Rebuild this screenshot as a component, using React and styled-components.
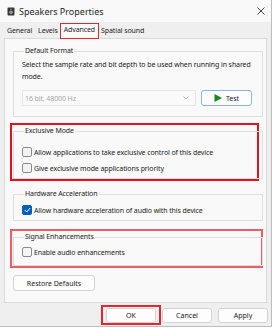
import React from 'react';
import styled, { createGlobalStyle } from 'styled-components';

const Global = createGlobalStyle`
  html, body { margin: 0; padding: 0; background: #ffffff; }
  body { font-family: "Noto Sans", "Open Sans", sans-serif; }
  * { box-sizing: border-box; }
`;

const Window = styled.div`
  width: 272px;
  height: 327px;
  background: #efefef;
  border-right: 1px solid #bdbdbd;
  border-bottom: 1px solid #bdbdbd;
  display: flex;
  flex-direction: column;
  font-size: 7px;
  letter-spacing: -0.1px;
  color: #1b1b1b;
`;

const TitleBar = styled.div`
  height: 22px;
  flex: none;
  background: #f9f9f9;
  display: flex;
  align-items: center;
  padding: 0 6px 0 7px;
  gap: 4px;
`;

const Title = styled.span`
  flex: 1;
  font-size: 9px;
  letter-spacing: 0;
  color: #1f1f1f;
`;

const TabStrip = styled.div`
  height: 16px;
  flex: none;
  display: flex;
  align-items: flex-end;
  padding-left: 4px;
`;

const Tab = styled.div`
  position: relative;
  height: ${p => (p.$active ? '15px' : '14px')};
  line-height: 14px;
  padding: 0 3px;
  background: ${p => (p.$active ? '#fbfbfb' : 'transparent')};
  &::after {
    content: '';
    display: ${p => (p.$mark ? 'block' : 'none')};
    position: absolute;
    inset: 0 -1px -1px -1px;
    border: 1.5px solid #e3262f;
  }
`;

const Panel = styled.div`
  margin: 0 4px;
  height: 265px;
  flex: none;
  background: #f9f9f9;
  border: 1px solid #dadada;
  padding: 7px 5px 0 8px;
  display: flex;
  flex-direction: column;
  align-items: flex-start;
`;

const Highlight = styled.div`
  width: ${p => p.$w}px;
  margin: ${p => p.$mt}px 0 0 -3px;
  padding: 1px 0 0 1px;
  border: 2px solid ${p => (p.$soft ? '#ee5c64' : '#e3121c')};
  display: flex;
`;

const Group = styled.fieldset`
  margin: ${p => p.$mt || 0}px 0 0 0;
  padding: ${p => p.$pad};
  width: 250px;
  flex: none;
  border: 1px solid #dedede;
  min-width: 0;
  display: flex;
  flex-direction: column;
  align-items: flex-start;
  gap: ${p => p.$gap || 0}px;
`;

const Legend = styled.legend`
  padding: 0 1px;
  margin-left: 2px;
  line-height: 10px;
  color: #1b1b1b;
`;

const Desc = styled.p`
  margin: 3px 0 0 0;
  line-height: 12px;
  color: #1b1b1b;
`;

const FormatRow = styled.div`
  display: flex;
  align-items: center;
  gap: 5px;
  margin-top: 7px;
`;

const Select = styled.div`
  width: 174px;
  height: 16px;
  border: 1px solid #e6e6e6;
  background: #fafafa;
  display: flex;
  align-items: center;
  justify-content: space-between;
  padding: 0 6px 0 2px;
  color: #a6a6a6;
`;

const Button = styled.button`
  position: relative;
  font: inherit;
  color: #1b1b1b;
  width: ${p => p.$w || 50}px;
  height: ${p => p.$h || 15}px;
  margin-top: ${p => p.$mt || 0}px;
  background: #fdfdfd;
  border: 1px solid ${p => (p.$focus ? '#8ab4e0' : '#d3d3d3')};
  border-radius: 3px;
  display: flex;
  align-items: center;
  justify-content: center;
  gap: 4px;
  padding: 0;
  flex: none;
  &::after {
    content: '';
    display: ${p => (p.$mark ? 'block' : 'none')};
    position: absolute;
    inset: -4px -6px -3px -6px;
    border: 2px solid #e3262f;
  }
`;

const CheckRow = styled.label`
  display: flex;
  align-items: center;
  gap: 2px;
  height: 10px;
`;

const Box = styled.span`
  width: 10px;
  height: 10px;
  border-radius: 2px;
  border: 1px solid ${p => (p.$checked ? '#005fb8' : '#8a8a8a')};
  background: ${p => (p.$checked ? '#005fb8' : '#f4f4f4')};
  display: flex;
  align-items: center;
  justify-content: center;
  flex: none;
`;

const Footer = styled.div`
  display: flex;
  justify-content: flex-end;
  gap: 6px;
  padding: 5px 3px 0 0;
`;

const Check = ({ checked, children }) => (
  <CheckRow>
    <Box $checked={checked}>
      {checked && (
        <svg width="7" height="6" viewBox="0 0 7 6">
          <path d="M0.8 3.1 L2.7 5 L6.2 1" fill="none" stroke="#fff" strokeWidth="1" />
        </svg>
      )}
    </Box>
    <span>{children}</span>
  </CheckRow>
);

export default function App() {
  return (
    <>
      <Global />
      <Window>
        <TitleBar>
          <svg width="8" height="9" viewBox="0 0 8 9">
            <rect x="0.5" y="0.5" width="7" height="8" rx="1" fill="#3a3a3a" />
            <circle cx="4" cy="5.2" r="1.8" fill="#9a9a9a" />
            <circle cx="4" cy="2.2" r="0.7" fill="#9a9a9a" />
          </svg>
          <Title>Speakers Properties</Title>
          <svg width="8" height="8" viewBox="0 0 8 8">
            <path d="M0.5 0.5 L7.5 7.5 M7.5 0.5 L0.5 7.5" stroke="#333" strokeWidth="0.9" />
          </svg>
        </TitleBar>
        <TabStrip>
          <Tab>General</Tab>
          <Tab>Levels</Tab>
          <Tab $active $mark>Advanced</Tab>
          <Tab>Spatial sound</Tab>
        </TabStrip>
        <Panel>
          <Group $pad="0 8px 10px 8px">
            <Legend>Default Format</Legend>
            <Desc>Select the sample rate and bit depth to be used when running in shared mode.</Desc>
            <FormatRow>
              <Select>
                <span>16 bit, 48000 Hz</span>
                <svg width="6" height="4" viewBox="0 0 6 4">
                  <path d="M0.5 0.5 L3 3 L5.5 0.5" fill="none" stroke="#b0b0b0" strokeWidth="0.8" />
                </svg>
              </Select>
              <Button $focus $w={51} $h={16}>
                <svg width="8" height="8" viewBox="0 0 8 8">
                  <path d="M0.5 0 L8 4 L0.5 8 Z" fill="#178a1e" />
                </svg>
                Test
              </Button>
            </FormatRow>
          </Group>
          <Highlight $w={249} $mt={6}>
            <Group $gap={6} $pad="11px 8px 5px 8px">
              <Legend>Exclusive Mode</Legend>
              <Check>Allow applications to take exclusive control of this device</Check>
              <Check>Give exclusive mode applications priority</Check>
            </Group>
          </Highlight>
          <Group $mt={8} $pad="6px 8px 5px 8px">
            <Legend>Hardware Acceleration</Legend>
            <Check checked>Allow hardware acceleration of audio with this device</Check>
          </Group>
          <Highlight $soft $w={253} $mt={8}>
            <Group $pad="5px 8px 8px 8px">
              <Legend>Signal Enhancements</Legend>
              <Check>Enable audio enhancements</Check>
            </Group>
          </Highlight>
          <Button $w={82} $h={16} $mt={7}>Restore Defaults</Button>
        </Panel>
        <Footer>
          <Button $mark>OK</Button>
          <Button>Cancel</Button>
          <Button>Apply</Button>
        </Footer>
      </Window>
    </>
  );
}
